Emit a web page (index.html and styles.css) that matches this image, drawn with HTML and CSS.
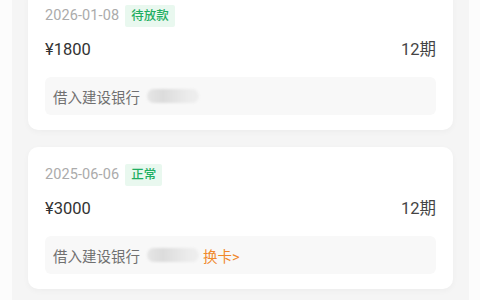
FILE: index.html
```html
<!DOCTYPE html>
<html>
<head>
<meta charset="utf-8">
<link rel="stylesheet" href="styles.css">
</head>
<body>
<div class="page">
  <div class="card first">
    <div class="row-top">
      <span class="date">2026-01-08</span>
      <span class="badge">待放款</span>
    </div>
    <div class="row-amount">
      <span class="amount">¥1800</span>
      <span class="period">12期</span>
    </div>
    <div class="bank">
      <span class="bank-name">借入建设银行</span>
      <span class="mask"></span>
    </div>
  </div>
  <div class="card">
    <div class="row-top">
      <span class="date">2025-06-06</span>
      <span class="badge">正常</span>
    </div>
    <div class="row-amount">
      <span class="amount">¥3000</span>
      <span class="period">12期</span>
    </div>
    <div class="bank">
      <span class="bank-name">借入建设银行</span>
      <span class="mask"></span>
      <span class="change">换卡&gt;</span>
    </div>
  </div>
</div>
</body>
</html>
```
FILE: styles.css
```css
html, body {
  margin: 0;
  padding: 0;
  background: #fcfcfc;
  overflow: hidden;
}
body {
  font-family: Roboto, "Noto Sans CJK SC", sans-serif;
}
.page {
  margin: 0 11px 0 12px;
  background: #f5f5f5;
  height: 300px;
  padding: 0 16px;
  display: flex;
  flex-direction: column;
  gap: 17px;
}
.card {
  background: #fff;
  border-radius: 10px;
  padding: 17px 17px 15px;
  box-shadow: 0 2px 6px rgba(0, 0, 0, 0.035);
  display: flex;
  flex-direction: column;
}
.card.first {
  margin-top: -12px;
}
.row-top {
  display: flex;
  align-items: center;
  height: 22px;
  gap: 6px;
}
.date {
  font-size: 14.5px;
  line-height: 22px;
  color: #ababab;
  letter-spacing: 0.1px;
}
.badge {
  font-size: 12.5px;
  color: #1fae62;
  background: #e9f8ef;
  padding: 0 6px;
  height: 22px;
  line-height: 22px;
  border-radius: 2px;
  font-weight: 500;
}
.row-amount {
  display: flex;
  justify-content: space-between;
  align-items: center;
  height: 22px;
  line-height: 22px;
  margin-top: 12px;
  font-size: 16.5px;
  color: #333;
}
.row-amount span {
  display: block;
  height: 22px;
  line-height: 22px;
}
.period {
  color: #444;
}
.bank {
  margin-top: 16px;
  height: 38px;
  background: #f8f8f8;
  border-radius: 6px;
  display: flex;
  align-items: center;
  padding: 0 8px;
  font-size: 14.5px;
  color: #707070;
}
.mask {
  width: 52px;
  height: 14px;
  margin-left: 7px;
  border-radius: 7px;
  background: linear-gradient(90deg, #e6e6e6 0%, #dcdcdc 30%, #e4e4e4 55%, #ececec 80%, #eeeeee 100%);
  filter: blur(1px);
}
.change {
  margin-left: 4px;
  color: #f0892c;
}
```
